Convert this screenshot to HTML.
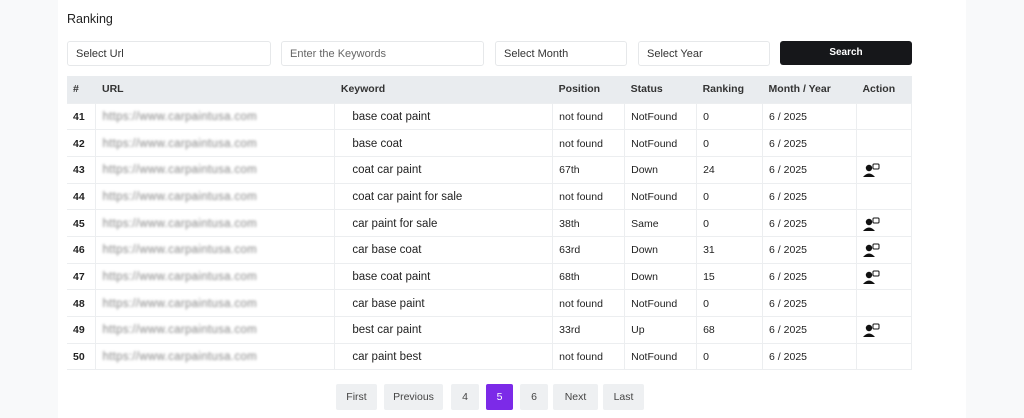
<!DOCTYPE html>
<html><head><style>
*{box-sizing:border-box;margin:0;padding:0}
body{width:1024px;height:418px;background:#f8f9fa;font-family:"Liberation Sans",sans-serif;color:#212529;position:relative;overflow:hidden}
.main{position:absolute;left:58px;top:0;width:908px;height:418px;background:#fff}
h1{position:absolute;left:67px;top:12px;font-size:12.5px;font-weight:normal;color:#222}
.in{position:absolute;top:41px;height:25px;border:1px solid #e6e8ea;border-radius:3px;font-size:11px;padding-left:8px;line-height:24px;color:#333}
.btn{position:absolute;left:780px;top:41px;width:132px;height:24px;background:#16171a;border-radius:3px;color:#fff;font-size:10px;text-align:center;line-height:24px;font-weight:bold}
table{position:absolute;left:67px;top:76px;border-collapse:collapse;width:845px;font-size:10.5px}
th{background:#e9ecef;height:27px;text-align:left;padding-left:6px;font-weight:bold;color:#333}
td{height:26.7px;border-top:1px solid #eceef0;border-left:1px solid #eceef0;padding-left:6px;padding-top:1px;color:#222}
td:first-child{border-left:none;font-weight:bold}
tr td:last-child{border-right:1px solid #eceef0}
tr:last-child td{border-bottom:1px solid #eceef0}
.u{color:#888;filter:blur(1.2px);font-size:11.5px;letter-spacing:0.3px}
.k{font-size:11.5px;padding-left:17px}
.pg{position:absolute;top:384px;height:26px;background:#eef0f2;font-size:10.5px;line-height:26px;text-align:center;color:#444;border-radius:2px}
.act{display:inline-block;vertical-align:middle}
</style></head><body>
<div class="main"></div>
<h1>Ranking</h1>
<div class="in" style="left:67px;width:204px">Select Url</div>
<div class="in" style="left:281px;width:203px;color:#666">Enter the Keywords</div>
<div class="in" style="left:495px;width:132px">Select Month</div>
<div class="in" style="left:638px;width:132px">Select Year</div>
<div class="btn">Search</div>
<table>
<colgroup><col style="width:29px"><col style="width:239px"><col style="width:218px"><col style="width:72px"><col style="width:72px"><col style="width:66px"><col style="width:94px"><col style="width:55px"></colgroup>
<tr><th>#</th><th>URL</th><th>Keyword</th><th>Position</th><th>Status</th><th>Ranking</th><th>Month / Year</th><th>Action</th></tr>
<tr><td>41</td><td><span class="u">https://www.carpaintusa.com</span></td><td class="k">base coat paint</td><td>not found</td><td>NotFound</td><td>0</td><td>6 / 2025</td><td></td></tr>
<tr><td>42</td><td><span class="u">https://www.carpaintusa.com</span></td><td class="k">base coat</td><td>not found</td><td>NotFound</td><td>0</td><td>6 / 2025</td><td></td></tr>
<tr><td>43</td><td><span class="u">https://www.carpaintusa.com</span></td><td class="k">coat car paint</td><td>67th</td><td>Down</td><td>24</td><td>6 / 2025</td><td><svg class="act" width="18" height="14" viewBox="0 0 18 14"><circle cx="6" cy="5" r="3.2" fill="#111"/><path d="M0 14 Q6 7 12 14Z" fill="#111"/><rect x="10" y="1" width="6" height="5" rx="1" fill="none" stroke="#111" stroke-width="1"/></svg></td></tr>
<tr><td>44</td><td><span class="u">https://www.carpaintusa.com</span></td><td class="k">coat car paint for sale</td><td>not found</td><td>NotFound</td><td>0</td><td>6 / 2025</td><td></td></tr>
<tr><td>45</td><td><span class="u">https://www.carpaintusa.com</span></td><td class="k">car paint for sale</td><td>38th</td><td>Same</td><td>0</td><td>6 / 2025</td><td><svg class="act" width="18" height="14" viewBox="0 0 18 14"><circle cx="6" cy="5" r="3.2" fill="#111"/><path d="M0 14 Q6 7 12 14Z" fill="#111"/><rect x="10" y="1" width="6" height="5" rx="1" fill="none" stroke="#111" stroke-width="1"/></svg></td></tr>
<tr><td>46</td><td><span class="u">https://www.carpaintusa.com</span></td><td class="k">car base coat</td><td>63rd</td><td>Down</td><td>31</td><td>6 / 2025</td><td><svg class="act" width="18" height="14" viewBox="0 0 18 14"><circle cx="6" cy="5" r="3.2" fill="#111"/><path d="M0 14 Q6 7 12 14Z" fill="#111"/><rect x="10" y="1" width="6" height="5" rx="1" fill="none" stroke="#111" stroke-width="1"/></svg></td></tr>
<tr><td>47</td><td><span class="u">https://www.carpaintusa.com</span></td><td class="k">base coat paint</td><td>68th</td><td>Down</td><td>15</td><td>6 / 2025</td><td><svg class="act" width="18" height="14" viewBox="0 0 18 14"><circle cx="6" cy="5" r="3.2" fill="#111"/><path d="M0 14 Q6 7 12 14Z" fill="#111"/><rect x="10" y="1" width="6" height="5" rx="1" fill="none" stroke="#111" stroke-width="1"/></svg></td></tr>
<tr><td>48</td><td><span class="u">https://www.carpaintusa.com</span></td><td class="k">car base paint</td><td>not found</td><td>NotFound</td><td>0</td><td>6 / 2025</td><td></td></tr>
<tr><td>49</td><td><span class="u">https://www.carpaintusa.com</span></td><td class="k">best car paint</td><td>33rd</td><td>Up</td><td>68</td><td>6 / 2025</td><td><svg class="act" width="18" height="14" viewBox="0 0 18 14"><circle cx="6" cy="5" r="3.2" fill="#111"/><path d="M0 14 Q6 7 12 14Z" fill="#111"/><rect x="10" y="1" width="6" height="5" rx="1" fill="none" stroke="#111" stroke-width="1"/></svg></td></tr>
<tr><td>50</td><td><span class="u">https://www.carpaintusa.com</span></td><td class="k">car paint best</td><td>not found</td><td>NotFound</td><td>0</td><td>6 / 2025</td><td></td></tr>
</table>
<div class="pg" style="left:336px;width:41px">First</div>
<div class="pg" style="left:384px;width:59px">Previous</div>
<div class="pg" style="left:451px;width:28px">4</div>
<div class="pg" style="left:486px;width:27px;background:#7c2ae8;color:#fff">5</div>
<div class="pg" style="left:520px;width:28px">6</div>
<div class="pg" style="left:553px;width:45px">Next</div>
<div class="pg" style="left:603px;width:41px">Last</div>
</body></html>
